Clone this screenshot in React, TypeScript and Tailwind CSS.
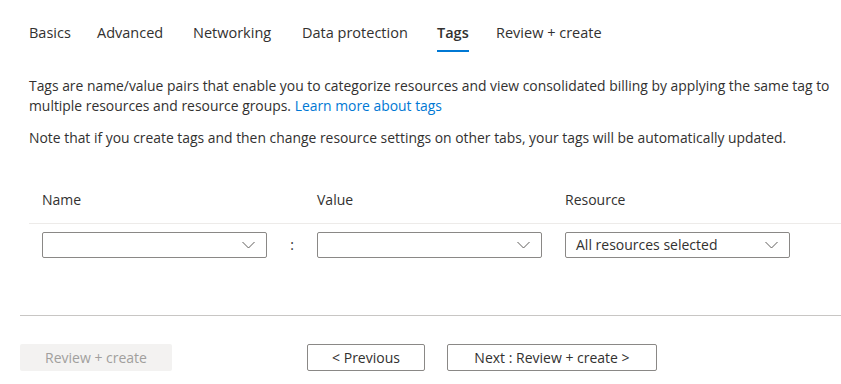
import React from "react";

const tabs = [
  { label: "Basics", w: "w-[68px]" },
  { label: "Advanced", w: "w-[96px]" },
  { label: "Networking", w: "w-[109px]" },
  { label: "Data protection", w: "w-[135px]" },
  { label: "Tags", w: "w-[59px]", active: true },
  { label: "Review + create", w: "w-[120px]" },
];

function Chevron() {
  return (
    <svg width="13" height="8" viewBox="0 0 13 8" className="shrink-0">
      <path d="M0.5 1 L6.5 7 L12.5 1" fill="none" stroke="#605e5c" strokeWidth="1" />
    </svg>
  );
}

function Dropdown({ value }: { value?: string }) {
  return (
    <div className="h-[26px] w-[225px] border border-[#8a8886] rounded-[2px] flex items-center justify-between pl-[10px] pr-[11px] bg-white">
      <span className="text-[14px] text-[#323130] leading-none">{value ?? ""}</span>
      <Chevron />
    </div>
  );
}

export default function App() {
  return (
    <div
      className="w-[841px] h-[384px] bg-white overflow-hidden text-[#323130]"
      style={{ fontFamily: '"Open Sans", "Noto Sans", sans-serif' }}
    >
      {/* Tabs */}
      <div className="flex pl-[29px] pt-[23px]">
        {tabs.map((t) => (
          <div key={t.label} className={`${t.w} flex flex-col`}>
            <div
              className={`text-[14.5px] leading-[20px] whitespace-nowrap ${
                t.active ? "font-semibold" : ""
              }`}
            >
              {t.label}
            </div>
            <div className={`mt-[7px] h-[2px] w-[32px] ${t.active ? "bg-[#0078d4]" : ""}`} />
          </div>
        ))}
      </div>

      {/* Description */}
      <div className="pl-[29px] pt-[24px] text-[13.9px] leading-[20px]">
        <p className="whitespace-nowrap">
          Tags are name/value pairs that enable you to categorize resources and view consolidated billing by applying the same tag to
          <br />
          multiple resources and resource groups.{" "}
          <a className="text-[#0078d4]">Learn more about tags</a>
        </p>
        <p className="mt-[12px] whitespace-nowrap">
          Note that if you create tags and then change resource settings on other tabs, your tags will be automatically updated.
        </p>
      </div>

      {/* Table */}
      <div className="ml-[29px] mt-[42px]">
        <div className="grid grid-cols-[225px_50px_225px_23px_225px] pl-[13px] text-[14px] leading-[20px] h-[33px]">
          <div>Name</div>
          <div />
          <div>Value</div>
          <div />
          <div>Resource</div>
        </div>
        <div className="h-px bg-[#edebe9]" />
        <div className="grid grid-cols-[225px_50px_225px_23px_225px] pl-[13px] pt-[8px] items-center">
          <Dropdown />
          <div className="text-center text-[14px] leading-none">:</div>
          <Dropdown />
          <div />
          <Dropdown value="All resources selected" />
        </div>
      </div>

      {/* Footer */}
      <div className="ml-[20px] mt-[57px] h-px bg-[#c8c6c4]" />
      <div className="flex pl-[20px] pt-[28px] text-[14px]">
        <button className="w-[152px] h-[27px] rounded-[2px] bg-[#f3f2f1] text-[#a19f9d]">Review + create</button>
        <button className="ml-[135px] w-[118px] h-[27px] rounded-[2px] border border-[#8a8886] text-[#323130]">
          &lt; Previous
        </button>
        <button className="ml-[22px] w-[210px] h-[27px] rounded-[2px] border border-[#8a8886] text-[#323130]">
          Next : Review + create &gt;
        </button>
      </div>
    </div>
  );
}
